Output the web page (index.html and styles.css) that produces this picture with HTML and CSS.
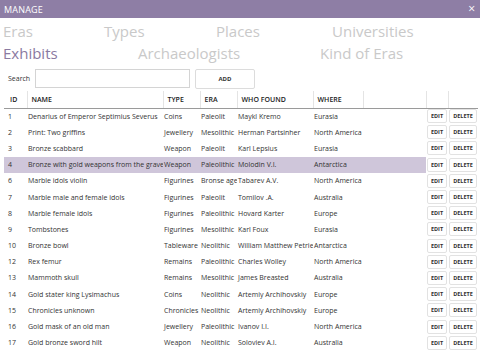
FILE: index.html
```html
<!DOCTYPE html>
<html lang="en">
<head>
    <meta charset="UTF-8">
    <title>Manage</title>
    <link rel="stylesheet" href="styles.css">
</head>
<body>
    <div class="titlebar">
        <span class="title">MANAGE</span>
        <span class="close">&times;</span>
    </div>

    <div class="tabs tabs-top">
        <span class="tab">Eras</span>
        <span class="tab">Types</span>
        <span class="tab">Places</span>
        <span class="tab">Universities</span>
    </div>
    <div class="tabs tabs-bottom">
        <span class="tab active">Exhibits</span>
        <span class="tab">Archaeologists</span>
        <span class="tab">Kind of Eras</span>
    </div>

    <div class="search-row">
        <label class="search-label">Search</label>
        <input type="text" class="search-input">
        <button class="btn-add">ADD</button>
    </div>

    <table class="grid">
        <thead>
            <tr>
                <th class="c-id">ID</th>
                <th class="c-name">NAME</th>
                <th class="c-type">TYPE</th>
                <th class="c-era">ERA</th>
                <th class="c-who">WHO FOUND</th>
                <th class="c-where">WHERE</th>
                <th class="c-fill"></th>
                <th class="c-edit"></th>
                <th class="c-del"></th>
            </tr>
        </thead>
        <tbody>
            <tr><td>1</td><td>Denarius of Emperor Septimius Severus</td><td>Coins</td><td>Paleolit</td><td>Maykl Kremo</td><td>Eurasia</td><td></td><td class="act"><button class="btn-sm">EDIT</button></td><td class="act"><button class="btn-sm">DELETE</button></td></tr>
            <tr><td>2</td><td>Print: Two griffins</td><td>Jewellery</td><td>Mesolithic</td><td>Herman Partsinher</td><td>North America</td><td></td><td class="act"><button class="btn-sm">EDIT</button></td><td class="act"><button class="btn-sm">DELETE</button></td></tr>
            <tr><td>3</td><td>Bronze scabbard</td><td>Weapon</td><td>Paleolit</td><td>Karl Lepsius</td><td>Eurasia</td><td></td><td class="act"><button class="btn-sm">EDIT</button></td><td class="act"><button class="btn-sm">DELETE</button></td></tr>
            <tr class="selected"><td>4</td><td>Bronze with gold weapons from the grave</td><td>Weapon</td><td>Paleolithic</td><td>Molodin V.I.</td><td>Antarctica</td><td></td><td class="act"><button class="btn-sm">EDIT</button></td><td class="act"><button class="btn-sm">DELETE</button></td></tr>
            <tr><td>6</td><td>Marble idols violin</td><td>Figurines</td><td>Bronse age</td><td>Tabarev A.V.</td><td>North America</td><td></td><td class="act"><button class="btn-sm">EDIT</button></td><td class="act"><button class="btn-sm">DELETE</button></td></tr>
            <tr><td>7</td><td>Marble male and female idols</td><td>Figurines</td><td>Paleolit</td><td>Tomilov .A.</td><td>Australia</td><td></td><td class="act"><button class="btn-sm">EDIT</button></td><td class="act"><button class="btn-sm">DELETE</button></td></tr>
            <tr><td>8</td><td>Marble female idols</td><td>Figurines</td><td>Paleolithic</td><td>Hovard Karter</td><td>Europe</td><td></td><td class="act"><button class="btn-sm">EDIT</button></td><td class="act"><button class="btn-sm">DELETE</button></td></tr>
            <tr><td>9</td><td>Tombstones</td><td>Figurines</td><td>Mesolithic</td><td>Karl Foux</td><td>Eurasia</td><td></td><td class="act"><button class="btn-sm">EDIT</button></td><td class="act"><button class="btn-sm">DELETE</button></td></tr>
            <tr><td>10</td><td>Bronze bowl</td><td>Tableware</td><td>Neolithic</td><td>William Matthew Petrie</td><td>Antarctica</td><td></td><td class="act"><button class="btn-sm">EDIT</button></td><td class="act"><button class="btn-sm">DELETE</button></td></tr>
            <tr><td>12</td><td>Rex femur</td><td>Remains</td><td>Paleolithic</td><td>Charles Wolley</td><td>North America</td><td></td><td class="act"><button class="btn-sm">EDIT</button></td><td class="act"><button class="btn-sm">DELETE</button></td></tr>
            <tr><td>13</td><td>Mammoth skull</td><td>Remains</td><td>Mesolithic</td><td>James Breasted</td><td>Australia</td><td></td><td class="act"><button class="btn-sm">EDIT</button></td><td class="act"><button class="btn-sm">DELETE</button></td></tr>
            <tr><td>14</td><td>Gold stater king Lysimachus</td><td>Coins</td><td>Neolithic</td><td>Artemiy Archihovskiy</td><td>Europe</td><td></td><td class="act"><button class="btn-sm">EDIT</button></td><td class="act"><button class="btn-sm">DELETE</button></td></tr>
            <tr><td>15</td><td>Chronicles unknown</td><td>Chronicles</td><td>Neolithic</td><td>Artemiy Archihovskiy</td><td>Europe</td><td></td><td class="act"><button class="btn-sm">EDIT</button></td><td class="act"><button class="btn-sm">DELETE</button></td></tr>
            <tr><td>16</td><td>Gold mask of an old man</td><td>Jewellery</td><td>Paleolithic</td><td>Ivanov I.I.</td><td>North America</td><td></td><td class="act"><button class="btn-sm">EDIT</button></td><td class="act"><button class="btn-sm">DELETE</button></td></tr>
            <tr><td>17</td><td>Gold bronze sword hilt</td><td>Weapon</td><td>Neolithic</td><td>Soloviev A.I.</td><td>Australia</td><td></td><td class="act"><button class="btn-sm">EDIT</button></td><td class="act"><button class="btn-sm">DELETE</button></td></tr>
        </tbody>
    </table>
</body>
</html>
```

FILE: styles.css
```css
body {
    font-family: "Open Sans", "Noto Sans", sans-serif;
    margin: 0;
    padding: 0;
    width: 480px;
    height: 360px;
    overflow: hidden;
    background-color: #fff;
    color: #333;
}
.titlebar {
    height: 18px;
    background-color: #8e7ea5;
    color: #fff;
    display: flex;
    justify-content: space-between;
    align-items: center;
    padding: 0 5px 0 4px;
}
.title {
    font-size: 9px;
    letter-spacing: 0.2px;
}
.close {
    font-size: 12px;
    line-height: 1;
}
.tabs {
    display: grid;
    padding-left: 3px;
    font-size: 15px;
    line-height: 22px;
    color: #c9c9c9;
}
.tabs-top {
    grid-template-columns: 101px 112px 116px auto;
    margin-top: 2px;
}
.tabs-bottom {
    grid-template-columns: 135px 182px auto;
}
.tab.active {
    color: #8a7aa1;
}
.search-row {
    display: flex;
    align-items: center;
    padding: 4px 0 0 8px;
    height: 21px;
}
.search-label {
    font-size: 7px;
    color: #333;
    width: 27px;
}
.search-input {
    width: 155px;
    height: 19px;
    box-sizing: border-box;
    border: 1px solid #d4d4d4;
    margin: 0;
    padding: 0 3px;
    outline: none;
}
.btn-add {
    margin-left: 5px;
    width: 60px;
    height: 20px;
    background-color: #fff;
    border: 1px solid #dcdcdc;
    border-radius: 2px;
    font-family: inherit;
    font-size: 6px;
    font-weight: 700;
    color: #333;
    padding: 0;
}
.grid {
    margin: 2px 0 0 4px;
    border-collapse: collapse;
    table-layout: fixed;
    width: 474px;
    font-size: 7px;
}
.grid th,
.grid td {
    box-sizing: border-box;
}
.grid th {
    height: 17px;
    text-align: left;
    font-weight: 600;
    font-size: 7px;
    padding: 0 0 0 4px;
    border-left: 1px solid #e4e4e4;
    border-bottom: 1px solid #9a9a9a;
    white-space: nowrap;
    color: #222;
}
.grid th:first-child {
    border-left: none;
    padding-left: 6px;
}
.grid td {
    height: 16.2px;
    padding: 0 0 0 1px;
    white-space: nowrap;
    overflow: hidden;
}
.grid td:first-child {
    padding-left: 4px;
}
.c-id { width: 23px; }
.c-name { width: 136px; }
.c-type { width: 37px; }
.c-era { width: 37px; }
.c-who { width: 76px; }
.c-where { width: 50px; }
.c-fill { width: 63px; }
.c-edit { width: 22px; }
.c-del { width: 30px; }
.grid tr.selected td {
    background-color: #cfc6da;
}
.grid tr.selected td.act {
    background-color: #fff;
}
.grid td.act {
    padding: 0 1px;
}
.btn-sm {
    display: block;
    width: 100%;
    height: 14px;
    background-color: #fff;
    border: 1px solid #e2e2e2;
    border-radius: 2px;
    font-family: inherit;
    font-size: 5.5px;
    font-weight: 700;
    color: #333;
    padding: 0;
}
```
